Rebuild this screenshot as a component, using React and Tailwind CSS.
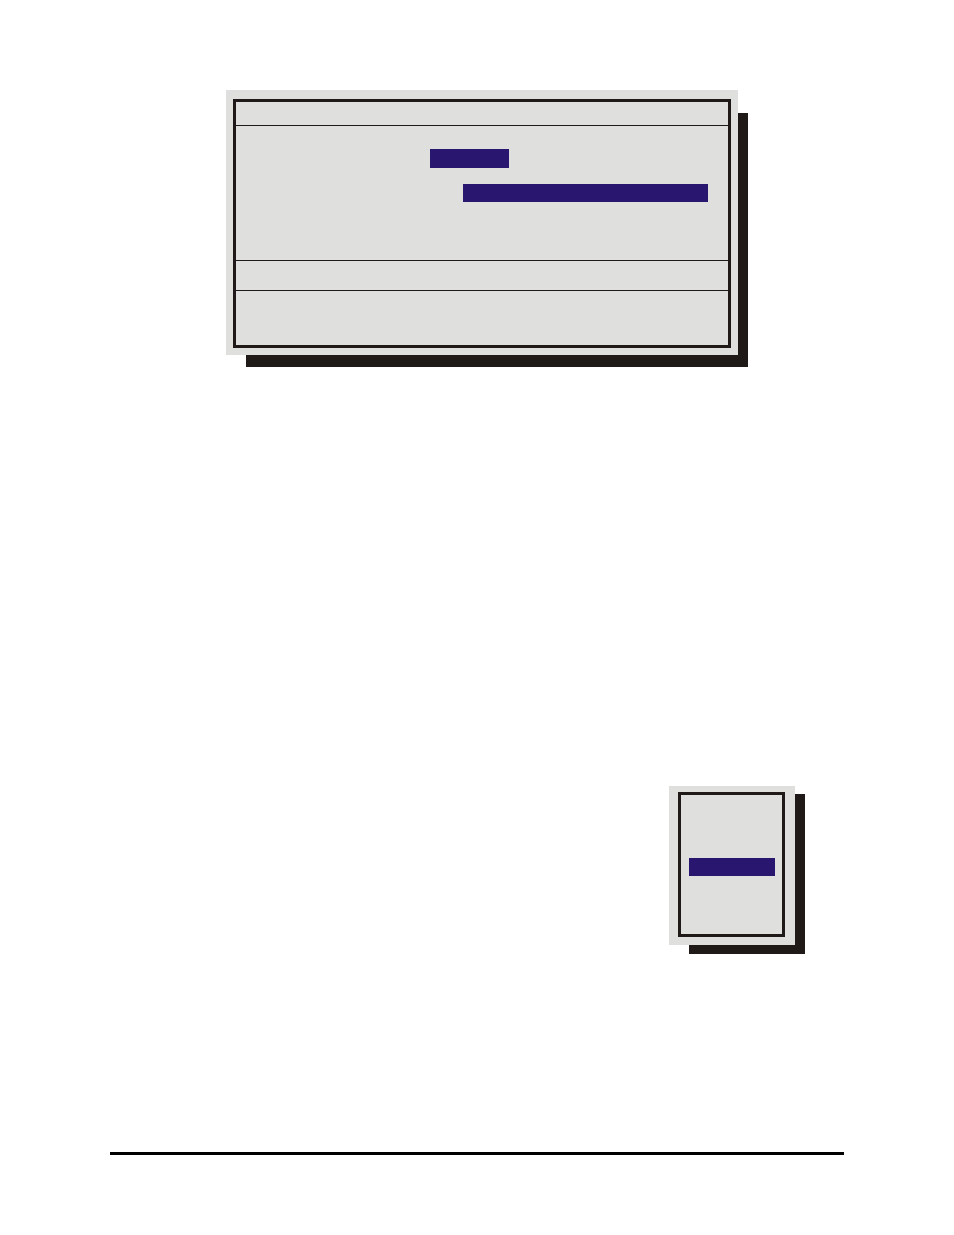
function Window({ className, shadow, frame, children }) {
  return (
    <section className={`relative isolate ${className}`}>
      <div className={`absolute -z-10 bg-[#1f1a17] ${shadow}`} />
      <div className={`bg-[#dfdfdd] ${frame}`}>
        <div className="border-3 border-[#1f1a17]">{children}</div>
      </div>
    </section>
  );
}

export default function App() {
  return (
    <main className="flex min-h-screen flex-col bg-white px-[110px] pt-[90px] pb-20 font-['Liberation_Sans',sans-serif]">
      <Window
        className="mr-[106px] ml-[116px]"
        shadow="top-[23px] -right-[10px] -bottom-3 left-5"
        frame="px-[7px] pt-[9px] pb-[7px]"
      >
        <header className="h-6 border-b border-[#1f1a17]" />
        <div className="flex flex-col gap-4 border-b border-[#1f1a17] pt-[23px] pr-5 pb-[58px]">
          <div className="ml-[194px] h-[19px] w-[79px] bg-[#28166f]" />
          <div className="ml-[227px] h-[18px] bg-[#28166f]" />
        </div>
        <div className="h-[30px] border-b border-[#1f1a17]" />
        <footer className="h-[54px]" />
      </Window>

      <Window
        className="mt-[431px] mr-[49px] w-[126px] self-end"
        shadow="top-2 -right-[10px] -bottom-[9px] left-5"
        frame="pt-1.5 pr-[10px] pb-2 pl-[9px]"
      >
        <div className="pt-[63px] pr-[7px] pb-[58px] pl-2">
          <div className="h-[18px] bg-[#28166f]" />
        </div>
      </Window>

      <hr className="mt-auto border-t-3 border-black" />
    </main>
  );
}
